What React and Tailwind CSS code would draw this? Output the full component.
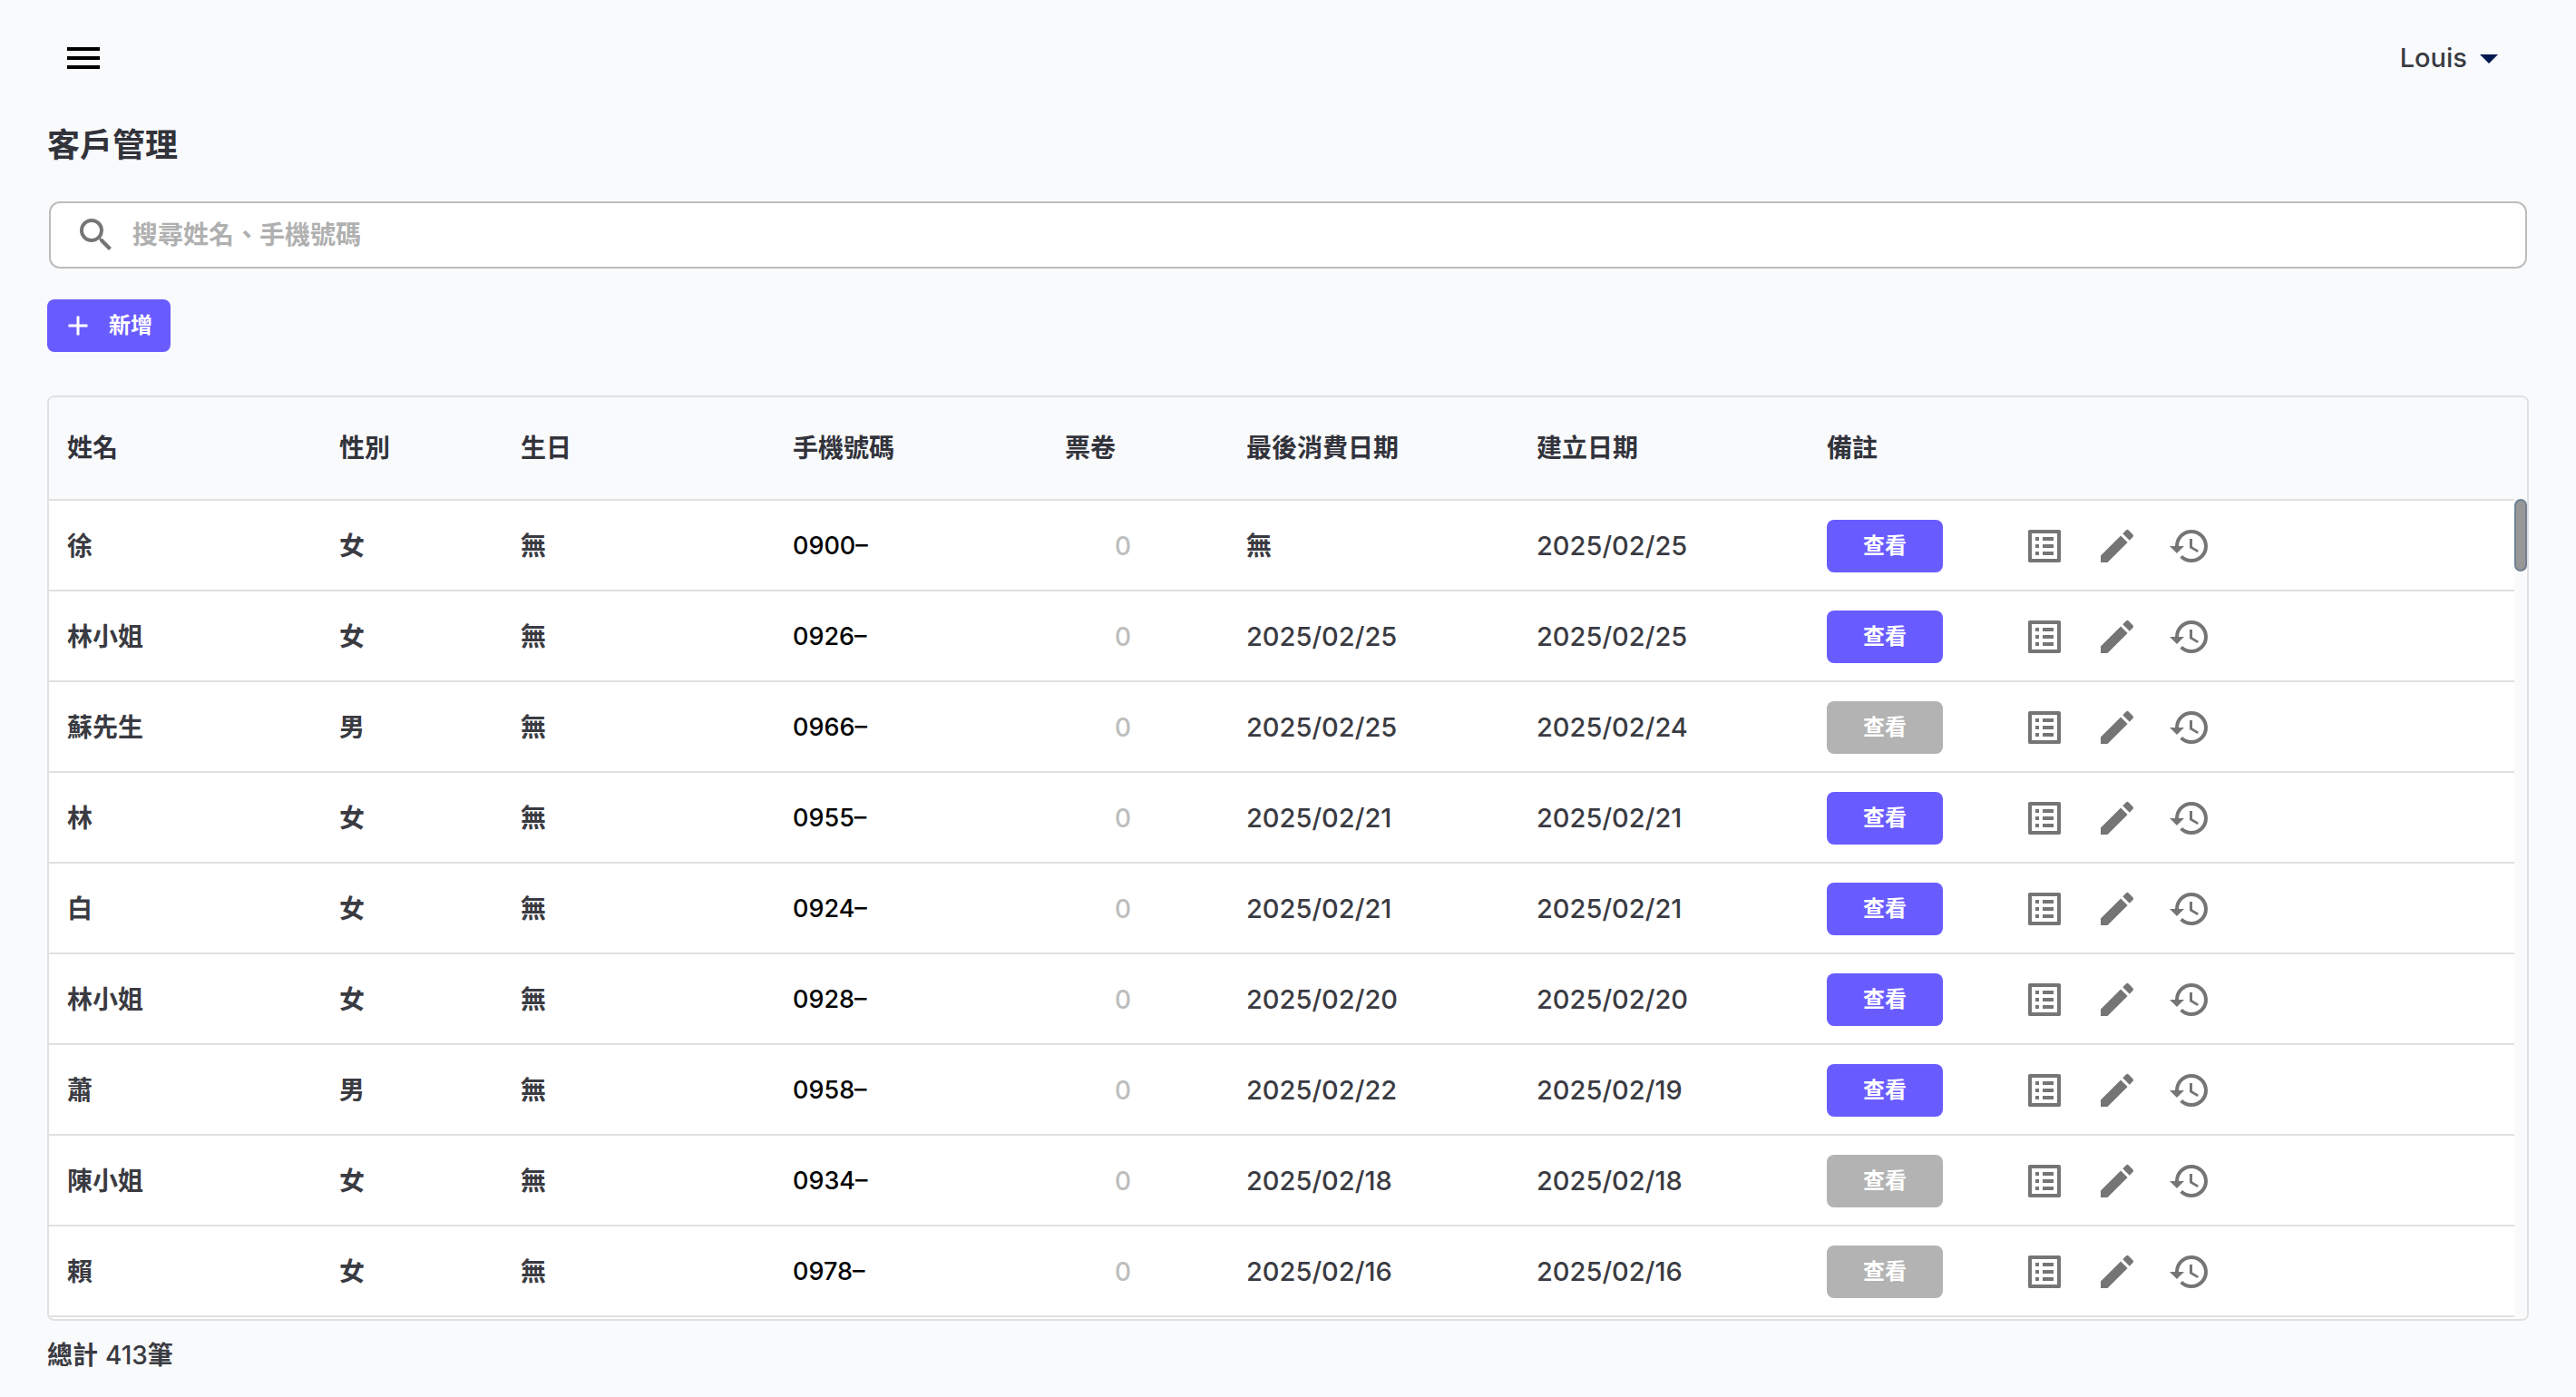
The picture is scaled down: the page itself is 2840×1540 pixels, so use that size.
import React from "react";
import { MdMenu, MdArrowDropDown, MdSearch, MdAdd, MdListAlt, MdEdit, MdHistory } from "react-icons/md";

const columns = [
  { label: "姓名", width: "w-[300px]" },
  { label: "性別", width: "w-[200px]" },
  { label: "生日", width: "w-[300px]" },
  { label: "手機號碼", width: "w-[300px]" },
  { label: "票卷", width: "w-[200px]" },
  { label: "最後消費日期", width: "w-[320px]" },
  { label: "建立日期", width: "w-[320px]" },
  { label: "備註", width: "w-[200px]" },
];

const customers = [
  { name: "徐", gender: "女", phone: "0900–", last: null, created: "2025/02/25", note: true },
  { name: "林小姐", gender: "女", phone: "0926–", last: "2025/02/25", created: "2025/02/25", note: true },
  { name: "蘇先生", gender: "男", phone: "0966–", last: "2025/02/25", created: "2025/02/24", note: false },
  { name: "林", gender: "女", phone: "0955–", last: "2025/02/21", created: "2025/02/21", note: true },
  { name: "白", gender: "女", phone: "0924–", last: "2025/02/21", created: "2025/02/21", note: true },
  { name: "林小姐", gender: "女", phone: "0928–", last: "2025/02/20", created: "2025/02/20", note: true },
  { name: "蕭", gender: "男", phone: "0958–", last: "2025/02/22", created: "2025/02/19", note: true },
  { name: "陳小姐", gender: "女", phone: "0934–", last: "2025/02/18", created: "2025/02/18", note: false },
  { name: "賴", gender: "女", phone: "0978–", last: "2025/02/16", created: "2025/02/16", note: false },
];

function IconButton({ label, children }) {
  return (
    <button type="button" aria-label={label} className="flex size-20 items-center justify-center rounded-full">
      {children}
    </button>
  );
}

function TopBar() {
  return (
    <header className="flex items-center justify-between text-black">
      <IconButton label="選單">
        <MdMenu className="size-12" />
      </IconButton>
      <button type="button" className="mr-5 flex items-center text-[29px] text-[#3a3b42]">
        Louis
        <MdArrowDropDown className="size-12 text-[#001850]" />
      </button>
    </header>
  );
}

function DateText({ value }) {
  return value ? <span className="text-[29px]">{value}</span> : <span className="font-semibold">無</span>;
}

function CustomerRow({ customer }) {
  return (
    <tr className="h-[100px] bg-white shadow-[inset_0_-2px_0_#e0e0e0]">
      <td className="px-5 font-semibold">{customer.name}</td>
      <td className="px-5 font-semibold">{customer.gender}</td>
      <td className="px-5 font-semibold">無</td>
      <td className="px-5 text-[27px] text-black">{customer.phone}</td>
      <td className="px-5">
        <button type="button" disabled className="w-32 text-center text-[#bdbdbd]">
          0
        </button>
      </td>
      <td className="px-5">
        <DateText value={customer.last} />
      </td>
      <td className="px-5">
        <DateText value={customer.created} />
      </td>
      <td className="px-5">
        <button
          type="button"
          disabled={!customer.note}
          className="block h-[58px] w-32 rounded-lg bg-[#695cff] text-2xl font-bold text-white disabled:bg-[#b3b3b3]"
        >
          查看
        </button>
      </td>
      <td className="px-5">
        <div className="flex text-[#757575]">
          <IconButton label="明細">
            <MdListAlt className="size-12" />
          </IconButton>
          <IconButton label="編輯">
            <MdEdit className="size-12" />
          </IconButton>
          <IconButton label="歷史紀錄">
            <MdHistory className="size-12" />
          </IconButton>
        </div>
      </td>
    </tr>
  );
}

export default function App() {
  return (
    <div className="min-h-screen bg-[#f9fafc] px-[52px] pt-6 font-['Inter','Noto_Sans_CJK_TC',sans-serif] text-[28px] leading-10 font-medium text-[#3a3b42]">
      <TopBar />
      <main>
        <h1 className="mt-8 text-4xl leading-12 font-semibold text-[#32333b]">客戶管理</h1>

        <label className="mx-0.5 mt-[38px] flex h-[74px] items-center gap-4 rounded-xl border-2 border-[#bdbdbd] bg-white px-[26px]">
          <MdSearch className="size-12 shrink-0 text-[#757575]" />
          <input
            type="search"
            aria-label="搜尋姓名、手機號碼"
            placeholder="搜尋姓名、手機號碼"
            className="min-w-0 flex-1 bg-transparent font-semibold outline-none placeholder:text-[#b0b0b0]"
          />
        </label>

        <button
          type="button"
          className="mt-[34px] flex h-[58px] items-center gap-4 rounded-lg bg-[#695cff] pr-5 pl-4 text-2xl font-bold text-white"
        >
          <MdAdd className="size-9" />
          新增
        </button>

        <section className="mt-12 flex overflow-hidden rounded-lg border-2 border-[#e0e0e0]">
          <div className="flex-1 bg-white pb-0.5">
            <table className="w-full table-fixed border-collapse text-left">
              <thead>
                <tr className="h-[114px] bg-[#f9fafc] text-[#32333b] shadow-[inset_0_-2px_0_#e0e0e0]">
                  {columns.map((column) => (
                    <th key={column.label} scope="col" className={`${column.width} px-5 pb-0.5 font-semibold`}>
                      {column.label}
                    </th>
                  ))}
                  <th aria-label="操作" />
                </tr>
              </thead>
              <tbody>
                {customers.map((customer) => (
                  <CustomerRow key={customer.phone} customer={customer} />
                ))}
              </tbody>
            </table>
          </div>
          <div className="w-3.5 bg-[#f9fafb] pt-28">
            <div className="h-20 rounded-full border-2 border-[#708090] bg-[#979797]" />
          </div>
        </section>

        <p className="mt-[18px] flex">
          <span className="mr-2 font-semibold">總計</span>413
          <span className="font-semibold">筆</span>
        </p>
      </main>
    </div>
  );
}
